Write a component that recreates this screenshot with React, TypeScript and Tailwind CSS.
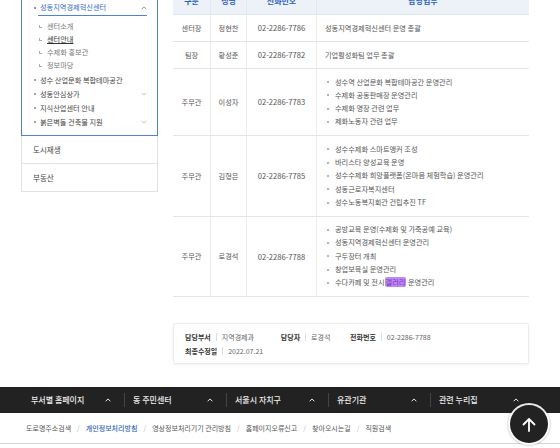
import React from "react";

const Chev = ({ up, color, w = 6 }: { up?: boolean; color: string; w?: number }) => (
  <svg width={w} height={Math.round(w * 0.6)} viewBox="0 0 10 6" fill="none">
    <path d={up ? "M1 5.2 L5 1.2 L9 5.2" : "M1 0.8 L5 4.8 L9 0.8"} stroke={color} strokeWidth="1.5" />
  </svg>
);

type Row = { g: string; n: string; t: string; d: React.ReactNode[]; single?: boolean };

const rows: Row[] = [
  { g: "센터장", n: "정현찬", t: "02-2286-7786", d: ["성동지역경제혁신센터 운영 총괄"], single: true },
  { g: "팀장", n: "황성준", t: "02-2286-7782", d: ["기업활성화팀 업무 총괄"], single: true },
  {
    g: "주무관",
    n: "이성자",
    t: "02-2286-7783",
    d: ["성수역 산업문화 복합테마공간 운영관리", "수제화 공동판매장 운영관리", "수제화 명장 관련 업무", "제화노동자 관련 업무"],
  },
  {
    g: "주무관",
    n: "김형은",
    t: "02-2286-7785",
    d: [
      "성수수제화 스마트앵커 조성",
      "바리스타 양성교육 운영",
      "성수수제화 희망플랫폼(온마음 체험학습) 운영관리",
      "성동근로자복지센터",
      "성수노동복지회관 건립추진 TF",
    ],
  },
  {
    g: "주무관",
    n: "로경석",
    t: "02-2286-7788",
    d: [
      "공방교육 운영(수제화 및 가죽공예 교육)",
      "성동지역경제혁신센터 운영관리",
      "구두장터 개최",
      "창업보육실 운영관리",
      <>
        수다카페 및 전시
        <span className="bg-[#bd8af2] text-[#7a2fc6] rounded-[2px] px-[1px]">갤러리</span> 운영관리
      </>,
    ],
  },
];

const footerCols = ["부서별 홈페이지", "동 주민센터", "서울시 자치구", "유관기관", "관련 누리집"];
const links = ["도로명주소검색", "개인정보처리방침", "영상정보처리기기 관리방침", "홈페이지오류신고", "찾아오시는길", "직원검색"];

export default function App() {
  return (
    <div className="relative w-[560px] h-[448px] overflow-hidden bg-white font-['Noto_Sans_CJK_KR',sans-serif] flex flex-col">
      {/* content */}
      <div className="h-[387px] shrink-0 overflow-hidden">
        <div className="flex items-start -mt-[12px] pl-[21px]">
          {/* sidebar */}
          <div className="w-[137px] mt-[8px] shrink-0">
            <div className="border border-[#4f82d2] pt-[3px] pb-[6px] text-[7.2px]">
              <div className="flex items-stretch h-[16px] ml-[12px] mr-[10px]">
                <span className="w-[4px] flex items-center">
                  <span className="w-[2px] h-[2px] rounded-full bg-[#4a7ccc]" />
                </span>
                <div className="flex-1 flex items-center justify-between border-b border-[#4f82d2] pl-[2px] text-[#3a6cc2]">
                  <span>성동지역경제혁신센터</span>
                  <Chev up color="#888" w={6} />
                </div>
              </div>
              <div className="pt-[4px] text-[#777]">
                {["센터소개", "센터안내", "수제화 홍보관", "정보마당"].map((s) => (
                  <div key={s} className="h-[13px] flex items-center pl-[17px]">
                    <span className="w-[3px] h-[3px] border-l border-b border-[#aaa] mb-[1px]" />
                    <span
                      className={
                        s === "센터안내" ? "ml-[5px] text-[#333] underline underline-offset-1" : "ml-[5px]"
                      }
                    >
                      {s}
                    </span>
                  </div>
                ))}
              </div>
              <div className="mt-[1px] text-[#444]">
                {[
                  { s: "성수 산업문화 복합테마공간" },
                  { s: "성동안심상가", c: true },
                  { s: "지식산업센터 안내" },
                  { s: "붉은벽돌 건축물 지원", c: true },
                ].map((it) => (
                  <div key={it.s} className="h-[14px] flex items-center pl-[12px] pr-[10px]">
                    <span className="w-[2px] h-[2px] rounded-full bg-[#888]" />
                    <span className="ml-[4px] flex-1">{it.s}</span>
                    {it.c && <Chev color="#bbb" w={6} />}
                  </div>
                ))}
              </div>
            </div>
            {["도시재생", "부동산"].map((s) => (
              <div
                key={s}
                className="h-[28px] flex items-center pl-[11px] border-x border-b border-[#e2e2e2] text-[7.5px] text-[#444]"
              >
                {s}
              </div>
            ))}
          </div>

          {/* table */}
          <div className="ml-[15px] w-[356px] shrink-0">
            <div className="grid grid-cols-[38px_36px_70px_212px] h-[27px] bg-[#edf2f9] border-b border-[#dfe5ee] text-[8px] font-bold text-[#2e63bd]">
              <div className="flex items-center justify-center border-r border-[#e2e8f1]">구분</div>
              <div className="flex items-center justify-center border-r border-[#e2e8f1]">성명</div>
              <div className="flex items-center justify-center border-r border-[#e2e8f1]">전화번호</div>
              <div className="flex items-center justify-center">담당업무</div>
            </div>
            {rows.map((r, i) => (
              <div
                key={i}
                className={
                  "grid grid-cols-[38px_36px_70px_212px] border-b border-[#e4e4e4] text-[7.2px] text-[#555] " +
                  (r.single ? "h-[27px]" : "")
                }
              >
                <div className="flex items-center justify-center border-r border-[#ececec]">{r.g}</div>
                <div className="flex items-center justify-center border-r border-[#ececec]">{r.n}</div>
                <div className="flex items-center justify-center border-r border-[#ececec] text-[7.6px]">{r.t}</div>
                {r.single ? (
                  <div className="flex items-center pl-[8px]">{r.d[0]}</div>
                ) : (
                  <div className="py-[6.5px] pl-[10px] leading-[13.3px]">
                    {r.d.map((x, j) => (
                      <div key={j} className="flex items-center h-[13.3px]">
                        <span className="w-[2px] h-[2px] rounded-full bg-[#999] shrink-0" />
                        <span className="ml-[6px] whitespace-nowrap">{x}</span>
                      </div>
                    ))}
                  </div>
                )}
              </div>
            ))}

            {/* summary */}
            <div className="mt-[26px] border border-[#ececec] rounded-[2px] shadow-[0_1px_3px_rgba(0,0,0,0.06)] pt-[6px] pb-[5px] pl-[11px] text-[7px] leading-[14px]">
              <div className="flex items-center">
                <span className="font-bold text-[#333]">담당부서</span>
                <span className="w-px h-[8px] bg-[#ddd] mx-[5px]" />
                <span className="text-[#666] w-[59px]">지역경제과</span>
                <span className="font-bold text-[#333]">담당자</span>
                <span className="w-px h-[8px] bg-[#ddd] mx-[5px]" />
                <span className="text-[#666] w-[39px]">로경석</span>
                <span className="font-bold text-[#333]">전화번호</span>
                <span className="w-px h-[8px] bg-[#ddd] mx-[5px]" />
                <span className="text-[#666]">02-2286-7788</span>
              </div>
              <div className="flex items-center">
                <span className="font-bold text-[#333]">최종수정일</span>
                <span className="w-px h-[8px] bg-[#ddd] mx-[5px]" />
                <span className="text-[#666]">2022.07.21</span>
              </div>
            </div>
          </div>
        </div>
      </div>

      {/* dark footer bar */}
      <div className="h-[26px] shrink-0 bg-[#222] flex items-center pl-[22px]">
        {footerCols.map((c, i) => (
          <div key={c} className="w-[102px] h-full flex items-center relative pl-[9px] pr-[13px] justify-between">
            {i > 0 && <span className="absolute left-0 top-[6px] h-[14px] w-px bg-[#444]" />}
            <span className="text-[8px] font-medium text-[#eee]">{c}</span>
            <Chev up color="#fff" w={6} />
          </div>
        ))}
      </div>

      {/* links */}
      <div className="h-[31px] shrink-0 border-b border-[#d4d4d4] flex items-center pl-[26px] text-[7px] text-[#555]">
        {links.map((l, i) => (
          <React.Fragment key={l}>
            {i > 0 && <span className="mx-[6px] text-[#bbb]">/</span>}
            <span className={l === "개인정보처리방침" ? "text-[#2e5fb6] font-medium" : ""}>{l}</span>
          </React.Fragment>
        ))}
      </div>

      {/* scroll-top button */}
      <div className="absolute left-[510px] top-[405px] w-[38px] h-[38px] rounded-full bg-[#222] flex items-center justify-center shadow-[0_0_0_2px_rgba(255,255,255,0.9),0_0_0_3px_rgba(0,0,0,0.08),0_1px_4px_rgba(0,0,0,0.25)]">
        <svg width="14" height="15" viewBox="0 0 14 15" fill="none">
          <path d="M7 14 V2 M1.5 7.5 L7 2 L12.5 7.5" stroke="#fff" strokeWidth="1.8" strokeLinecap="round" strokeLinejoin="round" />
        </svg>
      </div>
    </div>
  );
}
